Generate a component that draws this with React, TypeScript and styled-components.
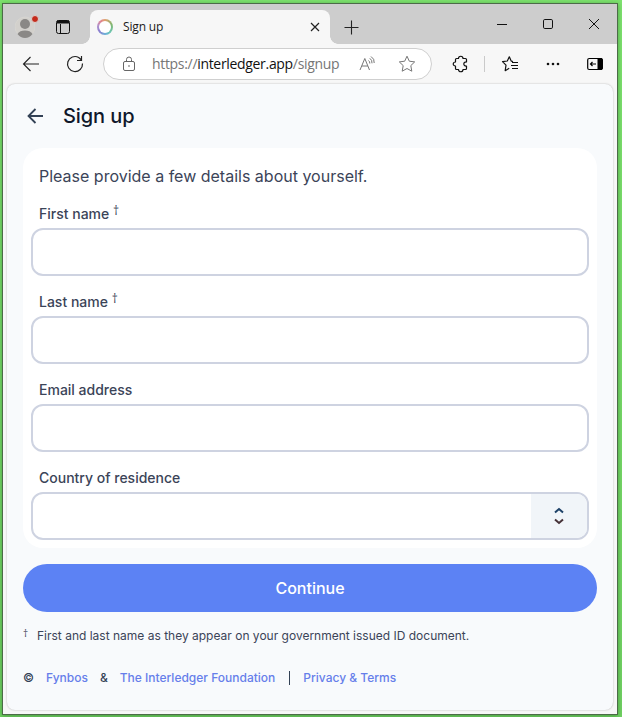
import React from "react";
import styled, { createGlobalStyle } from "styled-components";

const Global = createGlobalStyle`
  * { box-sizing: border-box; }
  body { margin: 0; background: #79de6b; overflow: hidden; }
  svg { display: block; flex: none; }
`;

const Desktop = styled.div`
  width: 622px;
  height: 717px;
  padding: 3px 4px 2px 2px;
  background: linear-gradient(#7fe370, #72d264);
  font-family: Inter, sans-serif;
`;

const Window = styled.div`
  display: flex;
  flex-direction: column;
  width: 616px;
  height: 712px;
  border: 1px solid #4c6b48;
  background: #f7f7f7;
  box-shadow: 0 1px 5px rgba(20, 80, 15, 0.45);
`;

const TabStrip = styled.div`
  display: flex;
  height: 40px;
  flex: none;
  background: #cdcdcd;
`;

const ProfileArea = styled.div`
  display: flex;
  align-items: center;
  width: 87px;
  padding: 6px 0 0 12px;
  gap: 20px;
`;

const Avatar = styled.div`
  position: relative;
  width: 20px;
  height: 22px;
`;

const AlertDot = styled.span`
  position: absolute;
  top: -1px;
  right: -4px;
  width: 8px;
  height: 8px;
  border: 1px solid #dcd5d2;
  border-radius: 50%;
  background: #c42b1c;
`;

const Tab = styled.div`
  position: relative;
  display: flex;
  align-items: center;
  width: 240px;
  height: 34px;
  margin-top: 6px;
  padding: 0 10px 0 7px;
  border-radius: 8px 8px 0 0;
  background: #f7f7f7;
  &::before, &::after {
    content: "";
    position: absolute;
    bottom: 0;
    width: 8px;
    height: 8px;
  }
  &::before {
    right: 100%;
    background: radial-gradient(circle at 0 0, #cdcdcd 7.5px, #f7f7f7 8px);
  }
  &::after {
    left: 100%;
    background: radial-gradient(circle at 100% 0, #cdcdcd 7.5px, #f7f7f7 8px);
  }
`;

const Favicon = styled.span`
  width: 16px;
  height: 16px;
  border-radius: 50%;
  background: conic-gradient(#e0a06e, #7fb872 20%, #6cc5b4 38%, #6bb3d8 48%, #8c7fd0 65%, #b193cd 78%, #e1838e 90%, #e0a06e);
  display: grid;
  place-items: center;
  &::after {
    content: "";
    width: 12px;
    height: 12px;
    border-radius: 50%;
    background: #fff;
  }
`;

const TabTitle = styled.span`
  flex: 1;
  margin-left: 10px;
  font: 12px/16px "Open Sans", sans-serif;
  letter-spacing: -0.15px;
  color: #1b1b1b;
`;

const NewTab = styled.div`
  padding: 16px 0 0 14px;
  flex: 1;
`;

const WindowControls = styled.div`
  display: flex;
  gap: 34px;
  padding: 14px 17px 0 0;
`;

const Toolbar = styled.div`
  display: flex;
  align-items: center;
  height: 40px;
  flex: none;
  padding-left: 19px;
`;

const ReloadSlot = styled.div`
  margin: 0 19px 0 26px;
`;

const AddressBar = styled.div`
  display: flex;
  align-items: center;
  width: 329px;
  height: 32px;
  border: 1px solid #cfcfcf;
  border-radius: 16px;
  padding: 0 15px 0 18px;
  background: #fff;
`;

const Url = styled.span`
  width: 207px;
  margin-left: 16px;
  font: 14px/20px "Open Sans", sans-serif;
  letter-spacing: -0.32px;
  color: #767676;
  white-space: nowrap;
  b { font-weight: 400; color: #111; }
`;

const StarSlot = styled.div`
  margin-left: auto;
`;

const Tools = styled.div`
  display: flex;
  align-items: center;
  margin-left: 20px;
`;

const Divider = styled.span`
  width: 1px;
  height: 16px;
  margin: 0 16px 0 15px;
  background: #cacaca;
`;

const MoreSlot = styled.span`
  margin: 0 27px;
`;

const Page = styled.main`
  display: flex;
  flex-direction: column;
  width: 606px;
  height: 626px;
  margin-left: 4px;
  padding: 16px 16px 0;
  border-radius: 8px;
  background: #f8fafc;
  box-shadow: 0 0 2px rgba(0, 0, 0, 0.28);
`;

const Header = styled.header`
  display: flex;
  align-items: center;
  height: 32px;
  padding-left: 4px;
  gap: 20px;
`;

const Title = styled.h1`
  margin: 0;
  font-size: 20px;
  line-height: 28px;
  font-weight: 500;
  letter-spacing: -0.08px;
  color: #0f172a;
`;

const Card = styled.section`
  height: 400px;
  margin-top: 16px;
  padding: 16px 8px 0;
  border-radius: 20px;
  background: #fff;
`;

const Intro = styled.p`
  margin: 0 8px 16px;
  font-size: 16px;
  line-height: 24px;
  color: #3b4458;
`;

const Field = styled.label`
  display: block;
  margin-bottom: 16px;
`;

const LabelText = styled.span`
  display: block;
  height: 20px;
  margin: 0 8px 4px;
  font-size: 14px;
  line-height: 20px;
  font-weight: 500;
  color: #3b4458;
`;

const Dagger = styled.sup`
  font-family: "Open Sans", sans-serif;
  font-size: 12px;
  line-height: 0;
  vertical-align: 4px;
`;

const Control = styled.span`
  display: flex;
  height: 48px;
  border: 2px solid #ced3e1;
  border-radius: 12px;
  overflow: hidden;
  background: #fff;
`;

const Input = styled.input`
  flex: 1;
  min-width: 0;
  padding: 0 12px;
  border: 0;
  outline: 0;
  background: transparent;
  font: 16px Inter, sans-serif;
`;

const PickerButton = styled.span`
  display: grid;
  place-items: center;
  width: 56px;
  background: #f1f5f9;
`;

const Continue = styled.button`
  flex: none;
  height: 48px;
  margin-top: 16px;
  border: 0;
  border-radius: 24px;
  background: #5c82f4;
  color: #fff;
  font: 500 16px/24px Inter, sans-serif;
`;

const Note = styled.p`
  display: flex;
  gap: 8px;
  margin: 16px 0 0;
  font-size: 12px;
  line-height: 16px;
  color: #3b4458;
`;

const NoteMark = styled.span`
  width: 6px;
  font-family: "Open Sans", sans-serif;
  font-size: 10px;
  line-height: 10px;
`;

const Footer = styled.footer`
  display: flex;
  align-items: center;
  gap: 12px;
  margin-top: 26px;
  font-size: 12px;
  line-height: 16px;
  font-weight: 500;
  color: #334155;
`;

const FooterLink = styled.a`
  color: #667eea;
`;

const Bar = styled.span`
  width: 1px;
  height: 14px;
  margin: 0 1px 0 2px;
  background: #334155;
`;

const TextField = ({ label, dagger = false, picker = false }: { label: string; dagger?: boolean; picker?: boolean }) => (
  <Field>
    <LabelText>{label}{dagger && <> <Dagger>†</Dagger></>}</LabelText>
    <Control>
      <Input />
      {picker && (
        <PickerButton>
          <svg width="12" height="20" viewBox="0 0 12 20" fill="none" strokeWidth="2">
            <path d="M2 6.500 6 3l4 3.500" stroke="#1e4268" />
            <path d="M2 13.500 6 17l4-3.500" stroke="#463238" />
          </svg>
        </PickerButton>
      )}
    </Control>
  </Field>
);

export default function App() {
  return (
    <Desktop>
      <Global />
      <Window>
        <TabStrip>
          <ProfileArea>
            <Avatar>
              <svg width="20" height="22" viewBox="0 0 20 22">
                <circle cx="10" cy="11" r="10" fill="#d2d0cc" stroke="#dcdad5" strokeWidth=".5" />
                <circle cx="10" cy="8" r="5" fill="#8a8886" />
                <path d="M2.500 18C4 15.500 6.500 14.500 10 14.500s6 1 7.500 3.500C15.500 20.500 13 22 10 22s-5.500-1.500-7.500-4Z" fill="#8a8886" />
              </svg>
              <AlertDot />
            </Avatar>
            <svg width="16" height="16" viewBox="0 0 16 16" fill="none" stroke="#111">
              <rect x="1.500" y="1.500" width="13" height="13" rx="2" />
              <path d="M2 3h12" strokeWidth="3" />
              <path d="M5.500 5v9.500" />
            </svg>
          </ProfileArea>
          <Tab>
            <Favicon />
            <TabTitle>Sign up</TabTitle>
            <svg width="10" height="10" viewBox="0 0 10 10" stroke="#222" strokeWidth="1.200"><path d="m1 1 8 8M9 1 1 9" /></svg>
          </Tab>
          <NewTab>
            <svg width="15" height="15" viewBox="0 0 15 15" stroke="#222" strokeWidth="1.100"><path d="M7.500 .5v14M.5 7.500h14" /></svg>
          </NewTab>
          <WindowControls>
            <svg width="12" height="12" viewBox="0 0 12 12" stroke="#111"><path d="M1 6.500h10" /></svg>
            <svg width="12" height="12" viewBox="0 0 12 12" fill="none" stroke="#111"><rect x="1.500" y="1.500" width="9" height="9" rx="1.300" /></svg>
            <svg width="12" height="12" viewBox="0 0 12 12" stroke="#111"><path d="m1 1 10 10M11 1 1 11" /></svg>
          </WindowControls>
        </TabStrip>
        <Toolbar>
          <svg width="18" height="16" viewBox="0 0 18 16" fill="none" stroke="#222" strokeWidth="1.100"><path d="M8.500 1 1.500 8l7 7M1.500 8H17" /></svg>
          <ReloadSlot>
            <svg width="18" height="18" viewBox="0 0 18 18" fill="none" stroke="#222" strokeWidth="1.200"><path d="M16.500 8.500A7.500 7.500 0 1 1 12.700 2.500L15.500 5M15.500 1v4.500H11" /></svg>
          </ReloadSlot>
          <AddressBar>
            <svg width="14" height="16" viewBox="0 0 14 16" fill="none" stroke="#666">
              <rect x="1.500" y="5.500" width="11" height="9" rx="1.500" />
              <path d="M4.500 5.500V3.500a2.500 2.500 0 0 1 5 0v2" />
              <circle cx="7" cy="10" r=".8" fill="#555" stroke="none" />
            </svg>
            <Url>https://<b>interledger.app</b>/signup</Url>
            <svg width="17" height="16" viewBox="0 0 17 16" fill="none" stroke="#767676">
              <path d="M1 14 5.800 2.500 10.500 14M2.900 10h5.900M9.500 4.500q1.500 1 1.300 3M10.800 2.300q2.500 1.700 2.200 5M12 .5q3.700 2.300 3.200 6.500" />
            </svg>
            <StarSlot>
              <svg width="18" height="18" viewBox="0 0 18 18" fill="none" stroke="#777" strokeLinejoin="round">
                <path d="m9 1.200 2.300 5 5.400.7-3.900 3.700 1 5.600L9 13.500l-4.800 2.700 1-5.600-3.900-3.700 5.400-.7Z" />
              </svg>
            </StarSlot>
          </AddressBar>
          <Tools>
            <svg width="17" height="18" viewBox="0 0 17 18" fill="none" stroke="#111" strokeWidth="1.200" strokeLinejoin="round">
              <path d="M4.500 3.500h2c0-3 4.500-3 4.500 0h2.500q1 0 1 1V7c-3.600-.4-3.600 4.400 0 4v2.500q0 1-1 1H11c0 3-4.500 3-4.500 0h-2q-1 0-1-1V11c-3 0-3-4 0-4V4.500q0-1 1-1Z" />
            </svg>
            <Divider />
            <svg width="18" height="18" viewBox="0 0 18 18" fill="none" stroke="#111" strokeWidth="1.200" strokeLinejoin="round">
              <path d="m12 6.500-1.800-.4L8.300 1.800 6.300 6 1.500 6.700 5 10.200l-.8 5.500 4-2.400M11 7.500h6M10 10.500h7M11 13.500h6" />
            </svg>
            <MoreSlot>
              <svg width="14" height="4" viewBox="0 0 14 4" fill="#111"><circle cx="2" cy="2" r="1.300" /><circle cx="7" cy="2" r="1.300" /><circle cx="12" cy="2" r="1.300" /></svg>
            </MoreSlot>
            <svg width="16" height="14" viewBox="0 0 16 14" fill="none" stroke="#000">
              <rect x=".7" y="1.500" width="14.600" height="11" rx="1.500" strokeWidth="1.200" />
              <path d="M11 1.500h3q1.300 0 1.300 1.300v8.400q0 1.300-1.300 1.300h-3Z" fill="#000" />
              <path d="M9 7H3.500M5.500 5l-2 2 2 2" strokeWidth="1.200" />
            </svg>
          </Tools>
        </Toolbar>
        <Page>
          <Header>
            <svg width="16" height="16" viewBox="0 0 16 16" fill="none" stroke="#334155" strokeWidth="1.800"><path d="M8.500 1 1.500 8l7 7M1.500 8H16" /></svg>
            <Title>Sign up</Title>
          </Header>
          <Card>
            <Intro>Please provide a few details about yourself.</Intro>
            <TextField label="First name" dagger />
            <TextField label="Last name" dagger />
            <TextField label="Email address" />
            <TextField label="Country of residence" picker />
          </Card>
          <Continue>Continue</Continue>
          <Note><NoteMark>†</NoteMark>First and last name as they appear on your government issued ID document.</Note>
          <Footer>
            <span>©</span>
            <FooterLink>Fynbos</FooterLink>
            <span>&amp;</span>
            <FooterLink>The Interledger Foundation</FooterLink>
            <Bar />
            <FooterLink>Privacy &amp; Terms</FooterLink>
          </Footer>
        </Page>
      </Window>
    </Desktop>
  );
}
